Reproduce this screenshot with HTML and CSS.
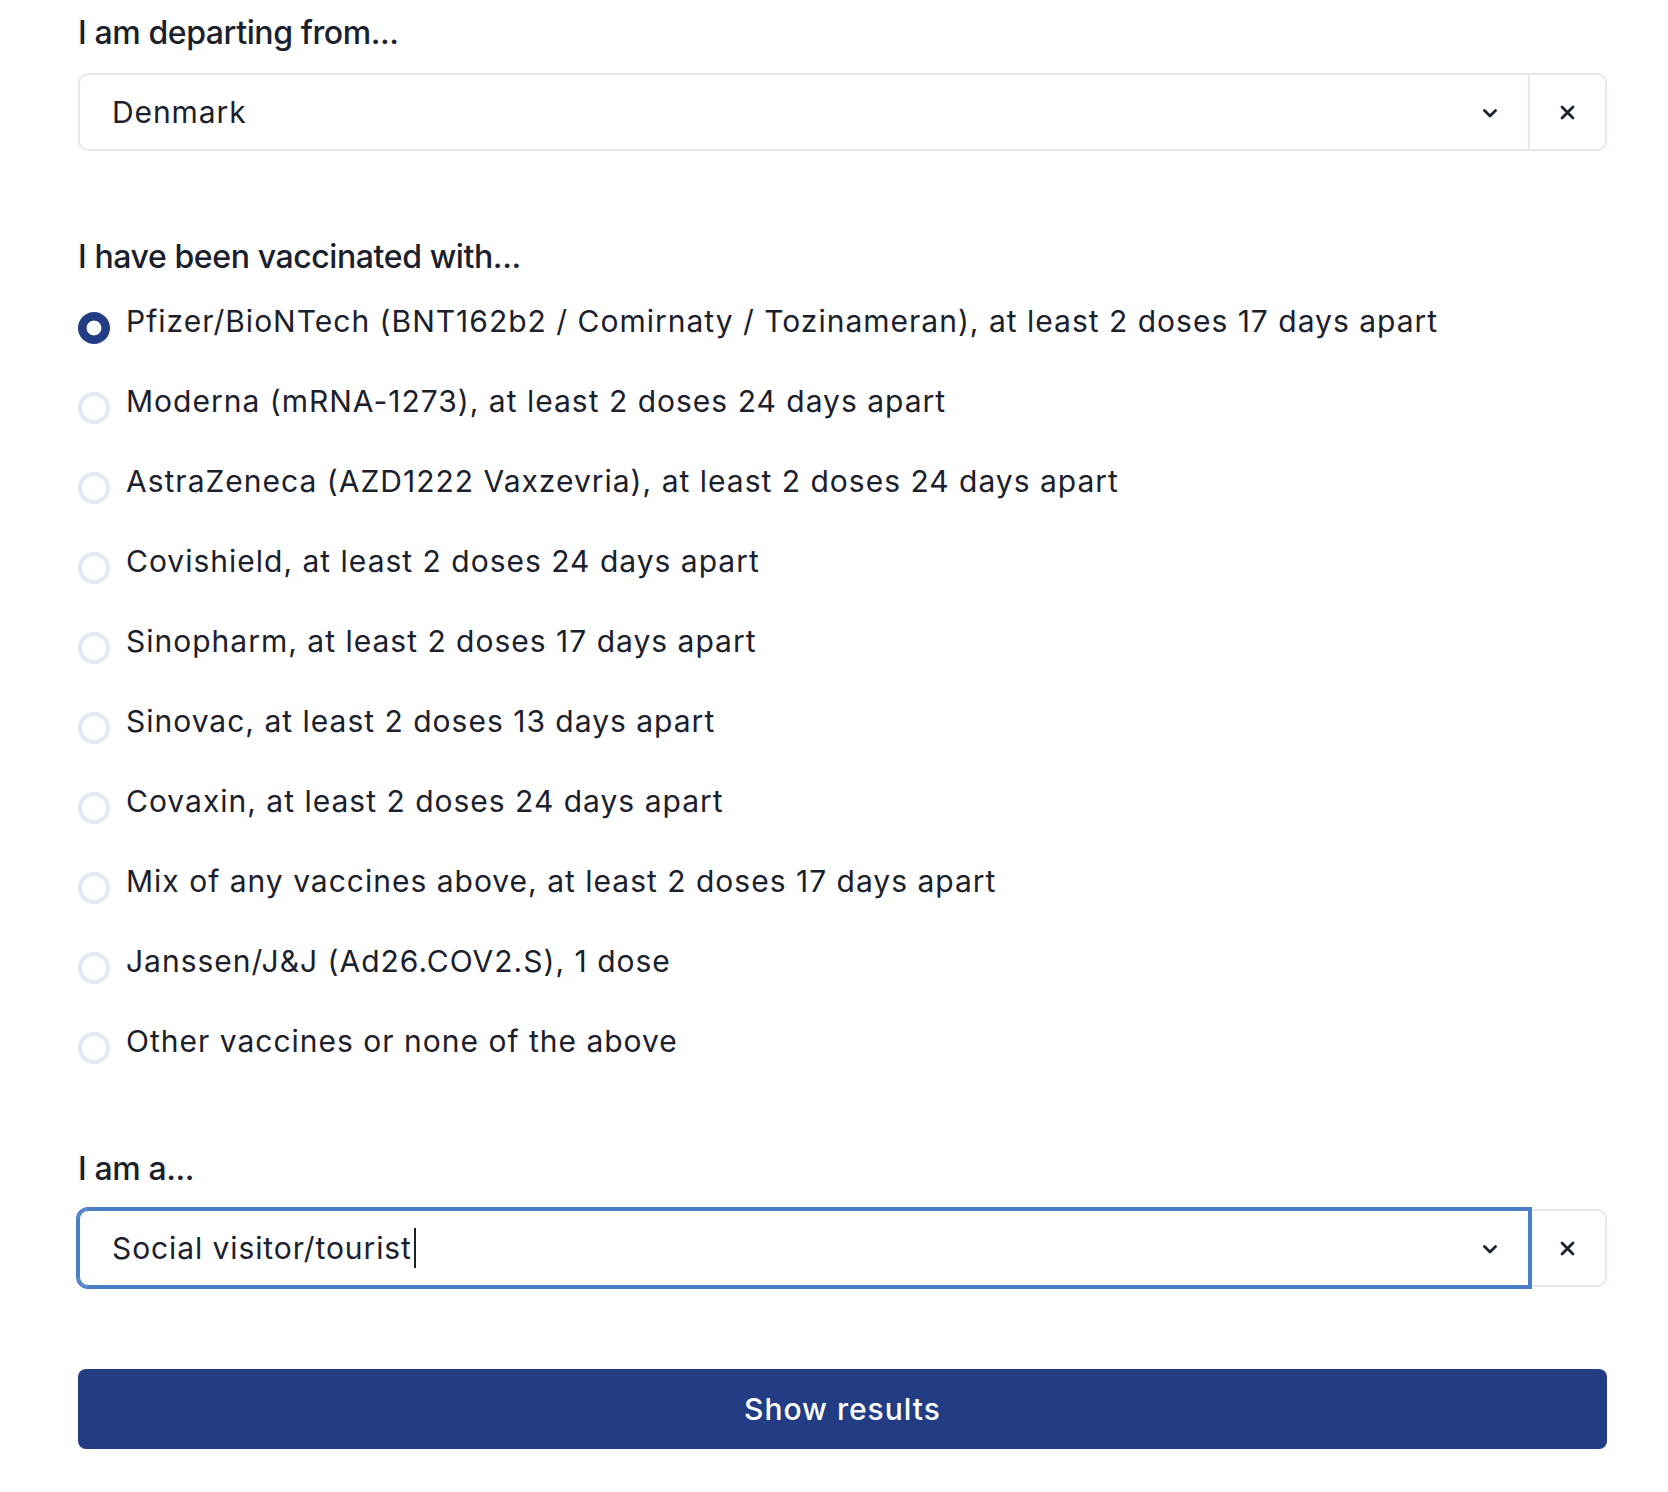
FILE: index.html
```html
<!DOCTYPE html>
<html lang="en">
<head>
<meta charset="utf-8">
<title>Travel form</title>
<link rel="stylesheet" href="styles.css">
</head>
<body>
<div class="form">
  <div class="field">
    <div class="label">I am departing from...</div>
    <div class="combo">
      <div class="select">
        <span class="value">Denmark</span>
        <svg class="chev" width="14" height="9" viewBox="0 0 14 9"><polyline points="1.5,1.5 7,7 12.5,1.5" fill="none" stroke="#1a202c" stroke-width="2.8" stroke-linecap="round" stroke-linejoin="round"/></svg>
      </div>
      <div class="clear">
        <svg width="15" height="15" viewBox="0 0 15 15"><path d="M2 2 L13 13 M13 2 L2 13" stroke="#1a202c" stroke-width="2.8" stroke-linecap="round"/></svg>
      </div>
    </div>
  </div>

  <div class="field field-radios">
    <div class="label">I have been vaccinated with...</div>
    <div class="radios">
      <label class="row"><span class="radio checked"></span><span>Pfizer/BioNTech (BNT162b2 / Comirnaty / Tozinameran), at least 2 doses 17 days apart</span></label>
      <label class="row"><span class="radio"></span><span>Moderna (mRNA-1273), at least 2 doses 24 days apart</span></label>
      <label class="row"><span class="radio"></span><span>AstraZeneca (AZD1222 Vaxzevria), at least 2 doses 24 days apart</span></label>
      <label class="row"><span class="radio"></span><span>Covishield, at least 2 doses 24 days apart</span></label>
      <label class="row"><span class="radio"></span><span>Sinopharm, at least 2 doses 17 days apart</span></label>
      <label class="row"><span class="radio"></span><span>Sinovac, at least 2 doses 13 days apart</span></label>
      <label class="row"><span class="radio"></span><span>Covaxin, at least 2 doses 24 days apart</span></label>
      <label class="row"><span class="radio"></span><span>Mix of any vaccines above, at least 2 doses 17 days apart</span></label>
      <label class="row"><span class="radio"></span><span>Janssen/J&amp;J (Ad26.COV2.S), 1 dose</span></label>
      <label class="row"><span class="radio"></span><span>Other vaccines or none of the above</span></label>
    </div>
  </div>

  <div class="field">
    <div class="label">I am a...</div>
    <div class="combo">
      <div class="select focused">
        <span class="value">Social visitor/tourist<span class="caret"></span></span>
        <svg class="chev" width="14" height="9" viewBox="0 0 14 9"><polyline points="1.5,1.5 7,7 12.5,1.5" fill="none" stroke="#1a202c" stroke-width="2.8" stroke-linecap="round" stroke-linejoin="round"/></svg>
      </div>
      <div class="clear">
        <svg width="15" height="15" viewBox="0 0 15 15"><path d="M2 2 L13 13 M13 2 L2 13" stroke="#1a202c" stroke-width="2.8" stroke-linecap="round"/></svg>
      </div>
    </div>
  </div>

  <button class="submit" type="button">Show results</button>
</div>
</body>
</html>
```

FILE: styles.css
```css
html, body {
  margin: 0;
  padding: 0;
  background: #ffffff;
}

body {
  font-family: Inter, "Noto Sans", "Liberation Sans", sans-serif;
  color: #1a202c;
}

.form {
  padding: 9px 61px 0 78px;
  display: flex;
  flex-direction: column;
}

.field {
  margin-bottom: 82px;
}

.field-radios {
  margin-bottom: 81px;
}

.label {
  font-size: 32px;
  line-height: 48px;
  font-weight: 500;
  letter-spacing: -0.4px;
  margin-bottom: 16px;
}

.field-radios .label {
  margin-bottom: 18px;
}

.combo {
  display: flex;
  height: 78px;
}

.select {
  flex: 1;
  display: flex;
  align-items: center;
  justify-content: space-between;
  border: 2px solid #e2e8f0;
  border-radius: 10px 0 0 10px;
  padding: 0 31px 0 32px;
  position: relative;
  z-index: 1;
}

.select.focused {
  border-color: #4a7fc8;
  box-shadow: 0 0 0 2px #4a7fc8;
}

.value {
  font-size: 30px;
  line-height: 40px;
  letter-spacing: 0.9px;
  display: flex;
  align-items: center;
}

.caret {
  display: inline-block;
  width: 2px;
  height: 40px;
  background: #1a202c;
  margin-left: 2px;
}

.chev {
  display: block;
  margin-top: 2px;
}

.clear {
  width: 75px;
  display: flex;
  align-items: center;
  justify-content: center;
  border: 2px solid #e2e8f0;
  border-left: 0;
  border-radius: 0 10px 10px 0;
}

.clear svg {
  display: block;
}

.radios {
  display: flex;
  flex-direction: column;
  gap: 35px;
}

.row {
  display: flex;
  align-items: flex-start;
  gap: 16px;
  font-size: 30px;
  line-height: 45px;
  letter-spacing: 1px;
}

.radio {
  flex: none;
  width: 32px;
  height: 32px;
  box-sizing: border-box;
  border: 4px solid #e2e8f0;
  border-radius: 50%;
  margin-top: 13px;
  background: #ffffff;
}

.radio.checked {
  border: 0;
  background: radial-gradient(circle, #ffffff 7px, #233d85 7.8px);
}

.submit {
  height: 80px;
  border: 0;
  border-radius: 8px;
  background: #233d85;
  color: #ffffff;
  font-family: Inter, "Noto Sans", "Liberation Sans", sans-serif;
  font-size: 30px;
  font-weight: 500;
  letter-spacing: 1px;
  cursor: pointer;
  padding: 0;
}
```
